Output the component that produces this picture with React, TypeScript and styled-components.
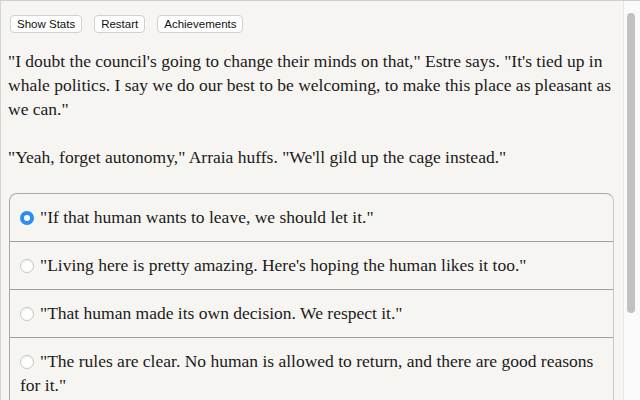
import React from "react";
import styled, { createGlobalStyle } from "styled-components";

const Global = createGlobalStyle`
  html, body { margin: 0; padding: 0; height: 100%; overflow: hidden; }
  body { background: #f7f5f2; }
`;

const Frame = styled.div`
  width: 640px;
  height: 400px;
  box-sizing: border-box;
  border-top: 1px solid #cfcfcf;
  border-left: 1px solid #d4d4d4;
  display: flex;
  overflow: hidden;
  background: #f7f5f2;
`;

const Content = styled.div`
  flex: 1;
  padding: 14px 9px 0 7px;
  overflow: hidden;
  font-family: "Liberation Serif", "Times New Roman", serif;
  font-size: 17.5px;
  line-height: 24px;
  color: #1a1a1a;
`;

const Toolbar = styled.div`
  display: flex;
  gap: 12px;
  padding-left: 2px;
`;

const Button = styled.button`
  font-family: "Liberation Sans", Arial, sans-serif;
  font-size: 11.5px;
  line-height: 15px;
  height: 18px;
  padding: 0 6px;
  background: #ffffff;
  color: #111;
  border: 1px solid #d0d0d0;
  border-radius: 4px;
`;

const Para = styled.p`
  margin: 16px 0 24px;
  & + & { margin-top: 0; }
`;

const Choices = styled.div`
  margin-top: 24px;
  margin-left: 1px;
  border: 1px solid #a9a9a9;
  border-right-color: #c8c8c8;
  border-radius: 8px 8px 0 0;
  border-bottom: none;
`;

const Choice = styled.label`
  display: block;
  padding: 11px 10px 12px 10px;
  border-top: 1px solid #9f9f9f;
  &:first-child { border-top: none; }
`;

const Radio = styled.span<{ $checked?: boolean }>`
  display: inline-block;
  box-sizing: border-box;
  width: 14px;
  height: 14px;
  border-radius: 50%;
  vertical-align: -2px;
  margin-right: 6px;
  background: #fff;
  border: ${(p) => (p.$checked ? "4.5px solid #2b8cf7" : "1px solid #c6c6c6")};
  box-shadow: ${(p) => (p.$checked ? "none" : "inset 0 1px 1px rgba(0,0,0,0.06)")};
`;

const Track = styled.div`
  width: 13px;
  flex: none;
  border-left: 1px solid #e6e6e6;
  background: #fafafa;
  padding: 12px 0 0 3px;
`;

const Thumb = styled.div`
  width: 8px;
  height: 300px;
  border-radius: 4px;
  background: #c1c1c1;
`;

const choices = [
  "\"If that human wants to leave, we should let it.\"",
  "\"Living here is pretty amazing. Here's hoping the human likes it too.\"",
  "\"That human made its own decision. We respect it.\"",
  "\"The rules are clear. No human is allowed to return, and there are good reasons for it.\"",
];

export default function App() {
  return (
    <>
      <Global />
      <Frame>
        <Content>
          <Toolbar>
            <Button>Show Stats</Button>
            <Button>Restart</Button>
            <Button>Achievements</Button>
          </Toolbar>
          <Para>
            "I doubt the council's going to change their minds on that," Estre says. "It's tied up in
            whale politics. I say we do our best to be welcoming, to make this place as pleasant as
            we can."
          </Para>
          <Para>"Yeah, forget autonomy," Arraia huffs. "We'll gild up the cage instead."</Para>
          <Choices>
            {choices.map((c, i) => (
              <Choice key={i}>
                <Radio $checked={i === 0} />
                {c}
              </Choice>
            ))}
          </Choices>
        </Content>
        <Track>
          <Thumb />
        </Track>
      </Frame>
    </>
  );
}
